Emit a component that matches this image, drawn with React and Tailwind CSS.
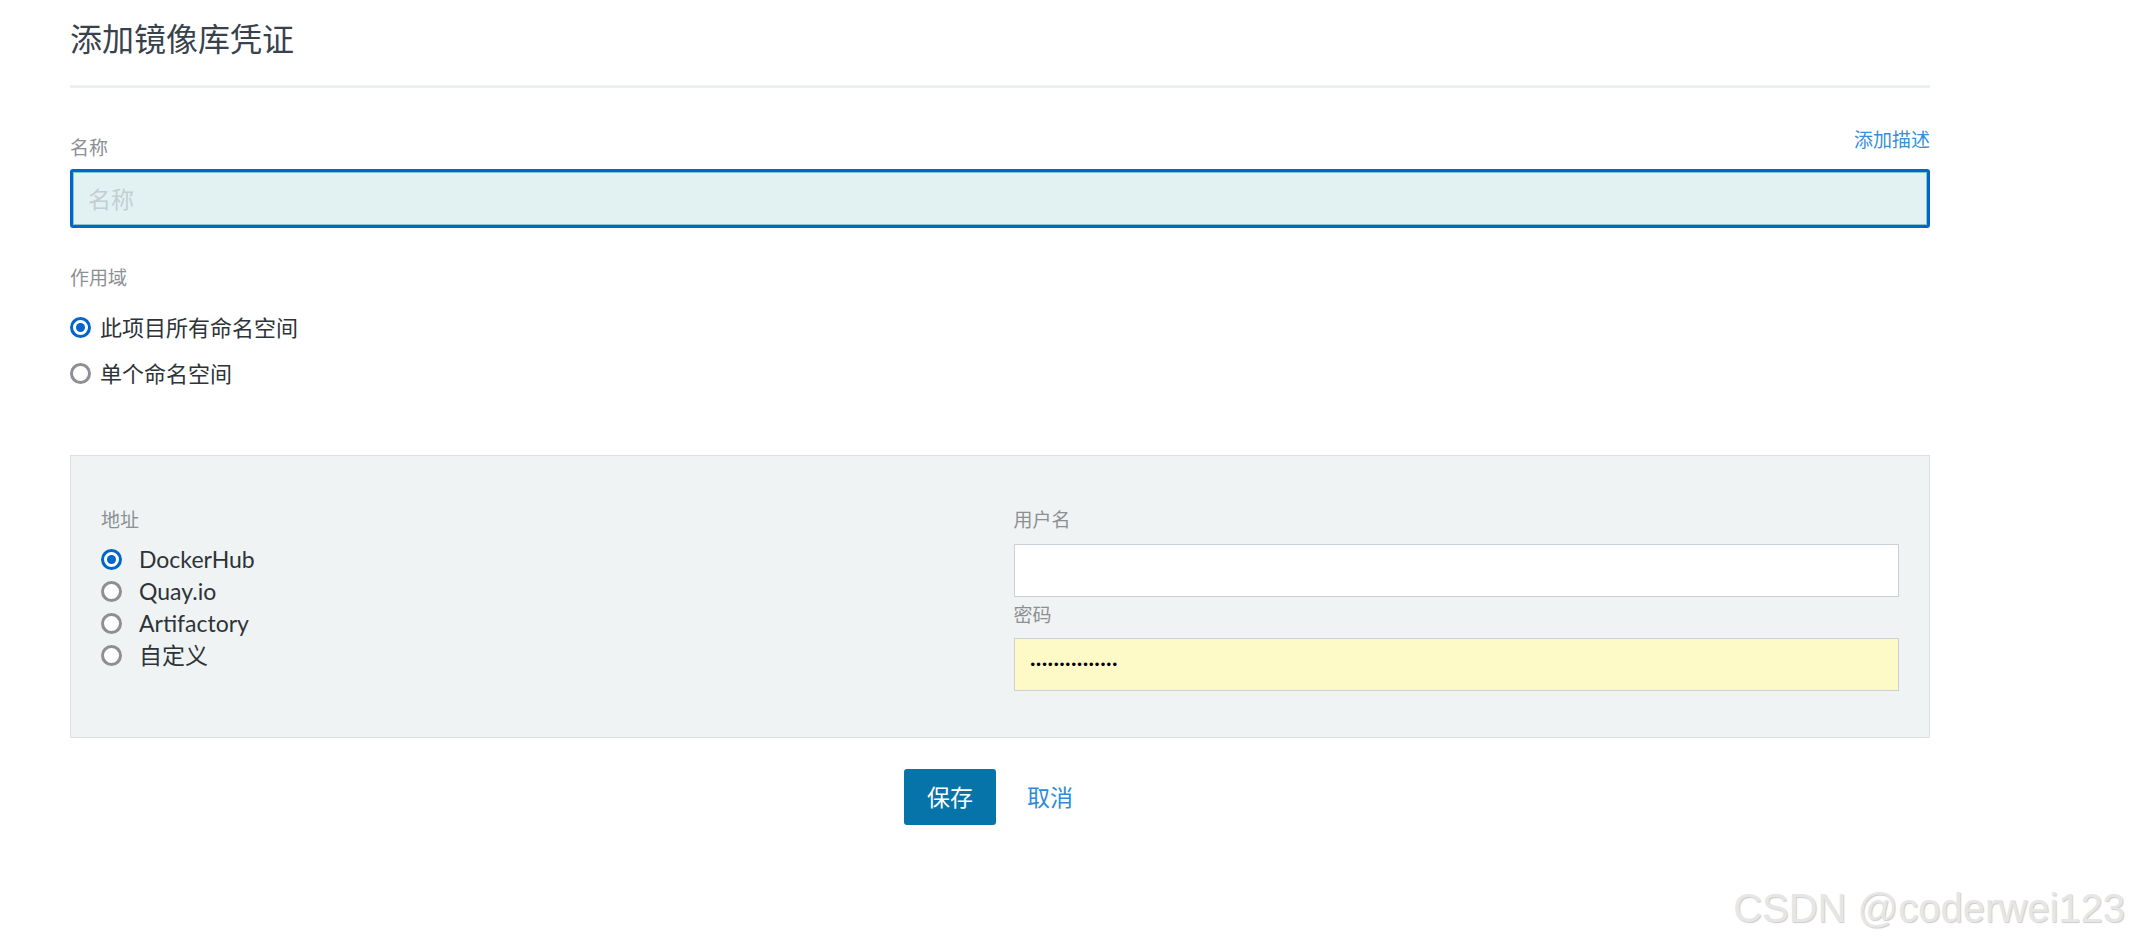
import { useState } from "react";

const FONT = "font-['Lato','Noto_Sans_CJK_SC',sans-serif]";

const Radio = ({ checked }) => (
  <span
    className={`flex h-[21px] w-[21px] shrink-0 items-center justify-center rounded-full bg-white border-[3px] ${
      checked ? "border-[#0066cc]" : "border-[#8d8f94]"
    }`}
  >
    {checked && <span className="h-[9px] w-[9px] rounded-full bg-[#0066cc]" />}
  </span>
);

const App = () => {
  const [scope, setScope] = useState(0);
  const [registry, setRegistry] = useState(0);

  const registries = ["DockerHub", "Quay.io", "Artifactory", "自定义"];

  return (
    <div className={`relative min-h-[943px] w-full bg-white ${FONT}`}>
      <div className="ml-[70px] w-[1860px] pt-[19px]">
        {/* Header */}
        <h1 className="border-b-[3px] border-[#eceff0] pb-[26px] text-[32px] leading-[40px] font-normal text-[#39424c]">
          添加镜像库凭证
        </h1>

        {/* Name */}
        <div className="mt-[39px] flex items-start justify-between text-[19px] leading-[26px]">
          <label className="mt-[8px] text-[#8c9093]">名称</label>
          <a href="#" className="text-[#3590d9]">添加描述</a>
        </div>
        <input
          placeholder="名称"
          className="mt-[8px] block h-[59px] w-full rounded-[3px] border-[3px] border-[#0066cc] bg-[#e2f2f3] px-[15px] text-[23px] shadow-[inset_0_0_0_1px_#86c6ce] outline-none placeholder:text-[#c4ced1]"
        />

        {/* Scope */}
        <div className="mt-[37px] text-[19px] leading-[26px] text-[#8c9093]">作用域</div>
        <div className="mt-[20px] flex flex-col gap-[14px]">
          {["此项目所有命名空间", "单个命名空间"].map((label, i) => (
            <div
              key={label}
              onClick={() => setScope(i)}
              className="flex h-[32px] cursor-pointer items-center gap-[9px] text-[22px] text-[#2d3338]"
            >
              <Radio checked={scope === i} />
              <span>{label}</span>
            </div>
          ))}
        </div>

        {/* Registry panel */}
        <div className="mt-[66px] grid grid-cols-2 gap-[27px] border border-[#dce1e3] bg-[#f0f3f4] px-[30px] pt-[51px] pb-[46px]">
          <div>
            <div className="text-[19px] leading-[26px] text-[#8c9093]">地址</div>
            <div className="mt-[10px] flex flex-col">
              {registries.map((name, i) => (
                <div
                  key={name}
                  onClick={() => setRegistry(i)}
                  className="flex h-8 cursor-pointer items-center gap-[17px] text-[23px] text-[#2d3338]"
                >
                  <Radio checked={registry === i} />
                  <span>{name}</span>
                </div>
              ))}
            </div>
          </div>

          <div>
            <div className="text-[19px] leading-[26px] text-[#8c9093]">用户名</div>
            <input className="mt-[11px] block h-[53px] w-full border border-[#c9d1d6] bg-white px-[16px] text-[19px] outline-none" />
            <div className="mt-[5px] text-[19px] leading-[26px] text-[#8c9093]">密码</div>
            <div className="mt-[10px] flex h-[53px] w-full items-center border border-[#c9d1d6] bg-[#fefac8] px-[16px]">
              <span className="font-['Liberation_Sans',sans-serif] text-[13px] tracking-[1.3px] text-black">
                •••••••••••••••
              </span>
            </div>
          </div>
        </div>

        {/* Actions */}
        <div className="mt-[31px] flex items-center justify-center gap-[8px]">
          <button className="h-[56px] rounded-[3px] bg-[#0774a9] px-[23px] text-[23px] text-white">保存</button>
          <button className="h-[56px] px-[23px] text-[23px] text-[#2f8ad8]">取消</button>
        </div>
      </div>

      {/* Watermark */}
      <div className="absolute right-[6px] top-[884px] font-['Liberation_Sans',sans-serif] text-[40px] leading-[48px] text-[#e6e6e6] [text-shadow:1px_1px_1px_#cccccc]">
        CSDN @coderwei123
      </div>
    </div>
  );
};

export default App;
